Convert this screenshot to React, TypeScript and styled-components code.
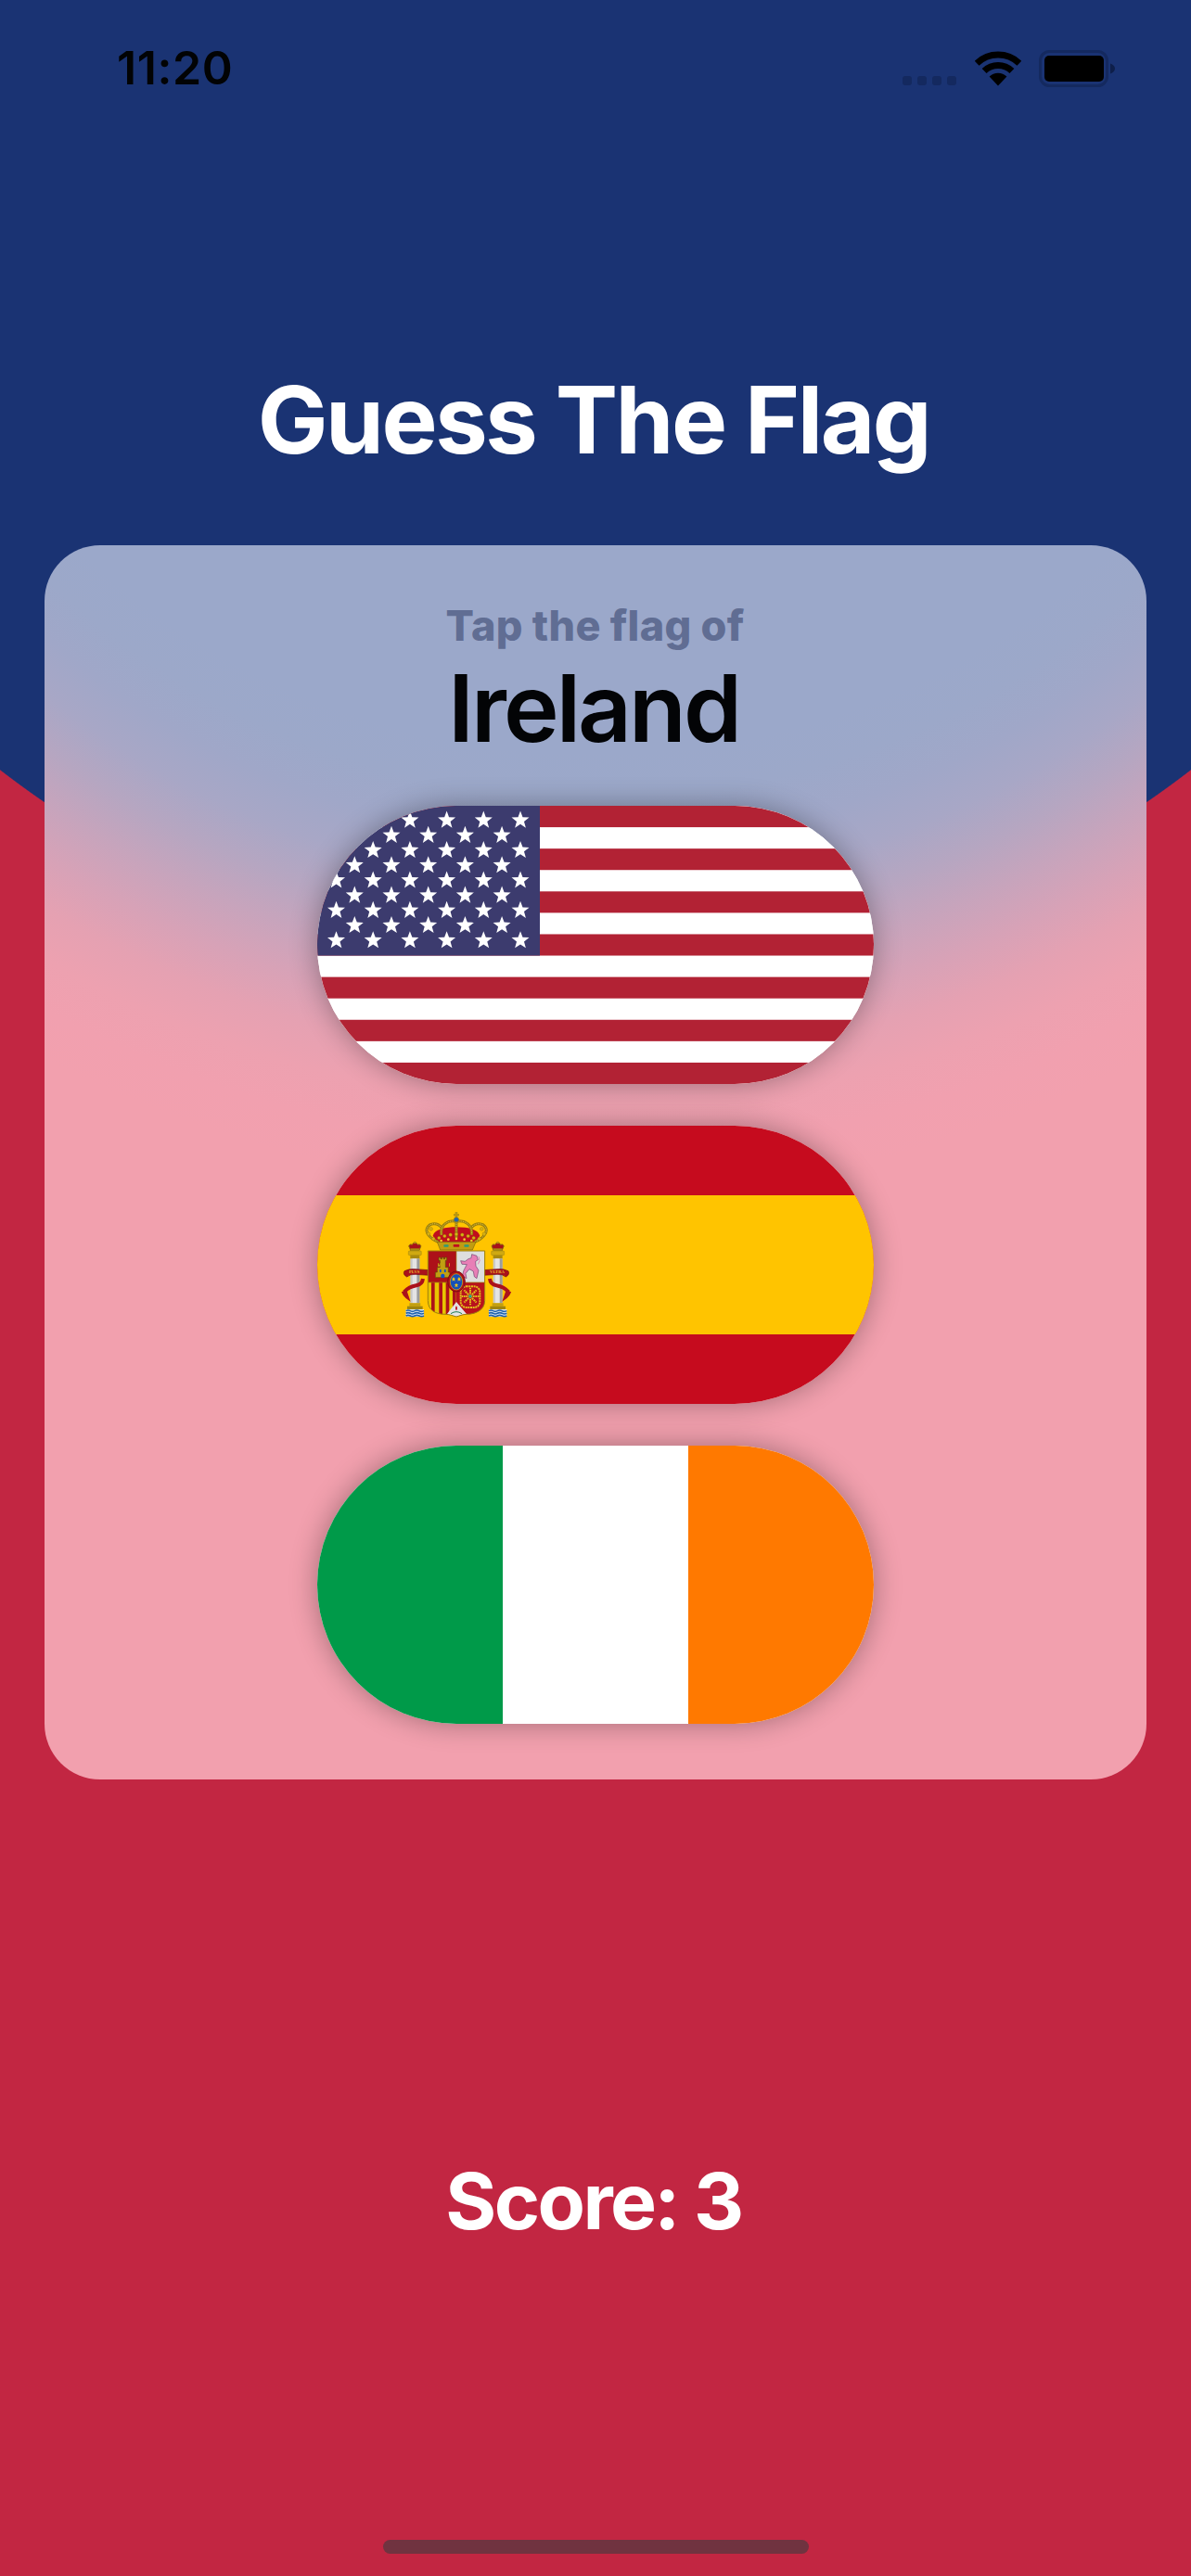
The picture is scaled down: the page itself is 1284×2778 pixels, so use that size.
import React from 'react'
import styled, { createGlobalStyle } from 'styled-components'

const GlobalStyle = createGlobalStyle`
    html, body {
        margin: 0;
        padding: 0;
        background: #c22642;
    }
    body {
        font-family: Inter, "Noto Sans", "Liberation Sans", sans-serif;
    }
`

// the frosted card: the page's circle seen through a blur
const frostedStops = () => {
    const blue = [154, 168, 202]
    const pink = [243, 160, 174]
    const radius = 1050
    const sigma = 95
    const steps: [number, number][] = [
        [-2.5, 0.006], [-2, 0.023], [-1.5, 0.067], [-1, 0.159], [-0.5, 0.309], [0, 0.5],
        [0.5, 0.691], [1, 0.841], [1.5, 0.933], [2, 0.977], [2.5, 0.994],
    ]
    return steps
        .map(([z, amount]) => {
            const rgb = blue.map((c, i) => Math.round(c + (pink[i] - c) * amount))
            return `rgb(${rgb.join(',')}) ${radius + z * sigma}px`
        })
        .join(', ')
}

const Screen = styled.div`
    width: 1284px;
    height: 2778px;
    display: flex;
    flex-direction: column;
    align-items: center;
    overflow: hidden;
    background: radial-gradient(circle 1050px at 642px 0, #1a3373 0, #1a3373 99.9%, #c22642 100%);
`

const StatusBar = styled.div`
    width: 100%;
    box-sizing: border-box;
    height: 104px;
    padding: 44px 82px 0 126px;
    display: flex;
    justify-content: space-between;
    align-items: flex-start;
`

const Clock = styled.span`
    font-size: 50px;
    line-height: 58px;
    font-weight: 600;
    letter-spacing: 0.6px;
    color: #020304;
`

const StatusIcons = styled.div`
    display: flex;
    align-items: flex-end;
    height: 40px;
    margin-top: 9px;
`

const SignalDots = styled.div`
    display: flex;
    gap: 6px;
    margin: 0 20px 1px 0;
`

const SignalDot = styled.i`
    display: block;
    width: 10px;
    height: 10px;
    border-radius: 3px;
    background: #14295f;
`

const Title = styled.h1`
    margin: 289px 0 0;
    height: 195px;
    padding-right: 4px;
    font-size: 101px;
    line-height: 119px;
    font-weight: 700;
    letter-spacing: -2.5px;
    color: #fff;
`

const Card = styled.section`
    width: 1188px;
    height: 1331px;
    box-sizing: border-box;
    padding: 60px 0 0;
    display: flex;
    flex-direction: column;
    align-items: center;
    border-radius: 60px;
    background: radial-gradient(circle 1600px at 594px -588px, ${frostedStops()});
`

const Prompt = styled.p`
    margin: 0;
    padding-right: 1px;
    font-size: 45px;
    line-height: 54px;
    font-weight: 800;
    letter-spacing: 0.3px;
    color: #606d93;
`

const Country = styled.h2`
    margin: 0 0 45px;
    padding-right: 4px;
    font-size: 101px;
    line-height: 122px;
    font-weight: 600;
    letter-spacing: -3px;
    color: #030406;
`

const FlagList = styled.div`
    display: flex;
    flex-direction: column;
    gap: 45px;
`

const FlagButton = styled.button`
    display: block;
    width: 600px;
    height: 300px;
    padding: 0;
    border: 0;
    border-radius: 150px;
    overflow: hidden;
    background: #fff;
    box-shadow: 0 0 30px rgba(0, 0, 0, 0.33);
    cursor: pointer;
    svg {
        display: block;
    }
`

const Score = styled.div`
    margin-top: 404px;
    padding-right: 4px;
    font-size: 84px;
    line-height: 102px;
    font-weight: 700;
    letter-spacing: -2.6px;
    color: #fff;
`

const HomeIndicator = styled.div`
    width: 459px;
    height: 15px;
    margin-top: auto;
    margin-bottom: 24px;
    border-radius: 8px;
    background: #703340;
`

const BatterySvg = styled.svg`
    margin: 0 0 -1px 19px;
`

const starPoints = (cx: number, cy: number, r: number) => {
    const points: string[] = []
    for (let i = 0; i < 10; i++) {
        const radius = i % 2 === 0 ? r : r * 0.42
        const angle = -Math.PI / 2 + (i * Math.PI) / 5
        points.push((cx + radius * Math.cos(angle)).toFixed(2) + ',' + (cy + radius * Math.sin(angle)).toFixed(2))
    }
    return points.join(' ')
}

function UsaFlag() {
    const stripes = Array.from({ length: 7 }, (_, i) => i * 2)
    const rows = Array.from({ length: 9 }, (_, i) => i)
    return (
        <svg width="600" height="300" viewBox="0 0 600 300">
            <rect width="600" height="300" fill="#fff" />
            {stripes.map(i => (
                <rect key={i} y={(i * 300) / 13} width="600" height={300 / 13} fill="#b22234" />
            ))}
            <rect width="240" height={(7 * 300) / 13} fill="#3c3b6e" />
            {rows.map(row =>
                Array.from({ length: row % 2 === 0 ? 6 : 5 }, (_, col) => (
                    <polygon
                        key={row + '-' + col}
                        points={starPoints((row % 2 === 0 ? 20.5 : 40.3) + col * 39.7, 15.6 + row * 16.2, 10)}
                        fill="#fff"
                    />
                ))
            )}
        </svg>
    )
}

function Pillar({ x, label }: { x: number; label: string }) {
    const mirror = label === 'VLTRA' ? `translate(${2 * x} 0) scale(-1 1)` : undefined
    return (
        <g>
            {/* small crown */}
            <path d={`M${x - 20} ${431} q5 -8 11 -4 q4 -8 9 -8 q5 0 9 8 q6 -4 11 4 l-7 16 h-26 z`} fill="#a8111b" stroke="#8a700c" strokeWidth="3" />
            <rect x={x - 14} y={439} width="28" height="9" fill="#a88a10" />
            <circle cx={x} cy={420} r="4" fill="#b8960f" />
            {/* capital */}
            <rect x={x - 21} y={447} width="42" height="14" rx="3" fill="#cfa912" stroke="#8a700c" strokeWidth="1" />
            <rect x={x - 15} y={461} width="30" height="11" fill="#a88a10" />
            {/* shaft */}
            <rect x={x - 15} y={472} width="30" height="144" fill="#c9c9c9" />
            <rect x={x - 8} y={472} width="13" height="144" fill="#e4e4e4" />
            <rect x={x + 7} y={472} width="8" height="144" fill="#9c9c9c" />
            {/* base */}
            <rect x={x - 18} y={616} width="36" height="10" fill="#c2a012" />
            <rect x={x - 25} y={626} width="50" height="10" fill="#9e840f" />
            {/* waves */}
            <rect x={x - 29} y={636} width="58" height="24" fill="#dbe6f0" />
            <path d={`M${x - 29} ${641} q7 -4 14 0 t14 0 t15 0 t15 0 M${x - 29} ${649} q7 -4 14 0 t14 0 t15 0 t15 0 M${x - 29} ${657} q7 -4 14 0 t14 0 t15 0 t15 0`} fill="none" stroke="#1f62ad" strokeWidth="5" />
            {/* ribbon */}
            <path d={`M${x - 34} ${512} q15 -8 36 -6 l44 3 v17 l-44 -3 q-18 -1 -28 8 q-14 -8 -8 -19 z`} fill="#ab111b" stroke="#700a11" strokeWidth="2" transform={mirror} />
            <path d={`M${x + 26} ${537} q-2 18 -22 22 q-24 5 -36 18 l6 18 q-8 -6 -12 -17`} fill="none" stroke="#ab111b" strokeWidth="12" transform={mirror} />
            <text x={x - 2} y="519" fontSize="14" fontFamily='"Liberation Serif", serif' fontWeight="700" fill="#e6bd2e" textAnchor="middle">{label}</text>
        </g>
    )
}

const shield = 'M394 447H578V608C578 640 545 652 520 652C505 652 495 658 486 660C477 658 465 652 450 652C420 652 394 640 394 608Z'
const crownArches = [
    'M428 418C402 408 384 388 392 372C400 356 426 354 438 372',
    'M545 418C571 408 589 388 581 372C573 356 547 354 535 372',
    'M438 395C432 362 460 346 486 352C512 346 540 362 535 395',
    'M486 352V405',
]

function CoatOfArms() {
    const pearls = [[404, 376], [396, 392], [412, 408], [430, 405], [448, 399], [467, 395], [486, 393], [505, 395], [524, 399], [542, 405], [560, 408], [576, 392], [568, 376]]
    const rimPearls = [[437, 414], [460, 410], [486, 408], [512, 410], [535, 414]]
    const spokes = [0, 45, 90, 135, 180, 225, 270, 315]
    return (
        <g transform="translate(-12 -14) scale(0.3333)">
            <Pillar x={352} label="PLVS" />
            <Pillar x={620} label="VLTRA" />

            {/* large crown */}
            <path d="M410 398C416 376 452 370 486 370C520 370 556 376 562 398L545 422H428Z" fill="#c00f1d" />
            <g fill="none" stroke="#9b800e" strokeWidth="9">
                {crownArches.map(d => <path key={d} d={d} />)}
            </g>
            <g fill="none" stroke="#d9bd3e" strokeWidth="3" strokeDasharray="4 3">
                {crownArches.map(d => <path key={d} d={d} />)}
            </g>
            {pearls.map(([cx, cy]) => <circle key={cx + '-' + cy} cx={cx} cy={cy} r="5.5" fill="#d8b213" stroke="#7f680b" strokeWidth="1" />)}
            {rimPearls.map(([cx, cy]) => <circle key={cx + '-' + cy} cx={cx} cy={cy} r="4" fill="#efcf2a" />)}
            <path d="M424 418H549L538 444H434Z" fill="#c09c12" stroke="#7f680b" strokeWidth="2" />
            <rect x="445" y="427" width="16" height="7" rx="3" fill="#2f9a7a" />
            <rect x="476" y="426" width="20" height="8" rx="3" fill="#c00f1d" />
            <rect x="511" y="427" width="16" height="7" rx="3" fill="#2f9a7a" />
            <rect x="482" y="321" width="8" height="22" fill="#b8960f" />
            <rect x="477" y="327" width="18" height="7" fill="#b8960f" />
            <circle cx="486" cy="346" r="8" fill="#1f62ad" stroke="#9b800e" strokeWidth="2" />

            {/* shield */}
            <clipPath id="shield-clip"><path d={shield} /></clipPath>
            <g clipPath="url(#shield-clip)">
                <rect x="394" y="447" width="92" height="102" fill="#ad1119" />
                <rect x="486" y="447" width="92" height="102" fill="#dedede" />
                <rect x="394" y="549" width="92" height="115" fill="#e8c400" />
                {[405, 430, 452, 474].map(x => <rect key={x} x={x} y="549" width="11" height="115" fill="#ad1119" />)}
                <rect x="486" y="549" width="92" height="115" fill="#b8121d" />
                <path d="M486 612L446 664H530Z" fill="#e4e4e4" />
                <path d="M486 640c-4 -4 -4 -10 0 -15c4 5 4 11 0 15z" fill="#c00f1d" />
                <path d="M468 650q18 -12 36 0" fill="none" stroke="#1d7a4e" strokeWidth="3" />
            </g>
            <path d={shield} fill="none" stroke="#9b800e" strokeWidth="3" />
            <path d="M486 447V549M394 549H578" stroke="#9b800e" strokeWidth="2" />

            {/* castle */}
            <path d="M418 533V516H424V500H433V478H429V468H435V473H439V468H445V473H449V468H455V478H451V500H460V516H465V533Z" fill="#c09f12" stroke="#5f4c08" strokeWidth="2" />
            <path d="M418 497h8v-10h3v4h3v-4h2v10h-16zM450 497h12v-10h3v10z" fill="#c09f12" />
            <circle cx="442" cy="528" r="6.5" fill="#0d52c9" />
            <rect x="432" y="507" width="5" height="9" fill="#0d52c9" />
            <rect x="447" y="507" width="5" height="9" fill="#0d52c9" />

            {/* lion */}
            <path d="M536 458L552 463L556 476L548 481L549 496L558 510L552 536L544 530L541 513L528 506L516 520L519 536L505 528L510 510L520 491L504 490L500 479L514 481L525 473L534 470Z" fill="#e87fb6" stroke="#6f4470" strokeWidth="2" />
            <path d="M558 465Q566 480 556 490" fill="none" stroke="#e87fb6" strokeWidth="3" />

            {/* chains */}
            <g stroke="#e3bf1c" strokeWidth="6" strokeDasharray="6 2" fill="none">
                <rect x="500" y="562" width="62" height="68" rx="18" />
                {spokes.map(a => (
                    <path key={a} d="M531 594V566" transform={`rotate(${a} 531 594)`} />
                ))}
            </g>
            <circle cx="531" cy="594" r="5" fill="#1c9c8a" />

            {/* centre oval */}
            <ellipse cx="486" cy="546" rx="28" ry="33" fill="#ad1119" stroke="#7d0c13" strokeWidth="3" />
            <ellipse cx="486" cy="547" rx="20" ry="26" fill="#1550b8" stroke="#e8c400" strokeWidth="2" />
            {[[477, 538], [495, 538], [486, 558]].map(([x, y]) => (
                <path key={x + '-' + y} d={`M${x} ${y - 7}l3 5l4 0l-4 3l2 6l-5 -3l-5 3l2 -6l-4 -3l4 0z`} fill="#f0c419" />
            ))}
        </g>
    )
}

function SpainFlag() {
    return (
        <svg width="600" height="300" viewBox="0 0 600 300">
            <rect width="600" height="300" fill="#c60b1e" />
            <rect y="75" width="600" height="150" fill="#ffc400" />
            <CoatOfArms />
        </svg>
    )
}

function IrelandFlag() {
    return (
        <svg width="600" height="300" viewBox="0 0 600 300">
            <rect width="200" height="300" fill="#009a49" />
            <rect x="200" width="200" height="300" fill="#fff" />
            <rect x="400" width="200" height="300" fill="#ff7900" />
        </svg>
    )
}

function WifiIcon() {
    return (
        <svg width="50" height="38" viewBox="0 0 50 38">
            <path d="M2.1 13.3A33 33 0 0 1 47.9 13.3" fill="none" stroke="#000" strokeWidth="7" />
            <path d="M10.1 21.5A21.5 21.5 0 0 1 39.9 21.5" fill="none" stroke="#000" strokeWidth="7" />
            <path d="M25 37.5L15.6 27.6A13.5 13.5 0 0 1 34.4 27.6Z" fill="#000" />
        </svg>
    )
}

function BatteryIcon() {
    return (
        <BatterySvg width="82" height="40" viewBox="0 0 82 40">
            <rect x="1.5" y="1.5" width="72" height="37" rx="10" fill="none" stroke="#14295f" strokeWidth="3" />
            <rect x="6" y="6" width="64" height="28" rx="5" fill="#000" />
            <path d="M77 14.5C80 15.5 82 17.5 82 20C82 22.5 80 24.5 77 25.5Z" fill="#0e1f4a" />
        </BatterySvg>
    )
}

export default function App() {
    return (
        <Screen>
            <GlobalStyle />
            <StatusBar>
                <Clock>11:20</Clock>
                <StatusIcons>
                    <SignalDots>
                        <SignalDot />
                        <SignalDot />
                        <SignalDot />
                        <SignalDot />
                    </SignalDots>
                    <WifiIcon />
                    <BatteryIcon />
                </StatusIcons>
            </StatusBar>
            <Title>Guess The Flag</Title>
            <Card>
                <Prompt>Tap the flag of</Prompt>
                <Country>Ireland</Country>
                <FlagList>
                    <FlagButton aria-label="United States"><UsaFlag /></FlagButton>
                    <FlagButton aria-label="Spain"><SpainFlag /></FlagButton>
                    <FlagButton aria-label="Ireland"><IrelandFlag /></FlagButton>
                </FlagList>
            </Card>
            <Score>Score: 3</Score>
            <HomeIndicator />
        </Screen>
    )
}
